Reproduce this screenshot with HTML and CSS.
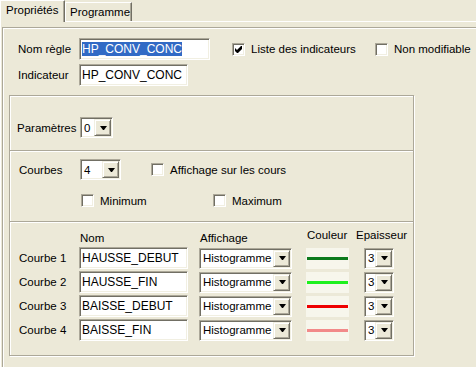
FILE: index.html
```html
<!DOCTYPE html>
<html lang="fr">
<head>
<meta charset="utf-8">
<title>Propriétés</title>
<link rel="stylesheet" href="styles.css">
</head>
<body>
<div class="tabs">
  <div class="tab active">Propriétés</div>
  <div class="tab inactive">Programme</div>
</div>
<div class="panel">
  <div class="outer">
    <div class="top">
      <div class="row">
        <span class="lbl lbl-top">Nom règle</span>
        <div class="field w-nom"><span class="sel">HP_CONV_CONC</span></div>
        <label class="chk chk-liste"><span class="box"><svg width="7" height="7" viewBox="0 0 7 7"><polygon points="0,2 2,4 6,0 7,0 7,3 3,7 2,7 0,5" fill="#000"/></svg></span>Liste des indicateurs</label>
        <label class="chk"><span class="box"></span>Non modifiable</label>
      </div>
      <div class="row row2">
        <span class="lbl lbl-top">Indicateur</span>
        <div class="field w-ind">HP_CONV_CONC</div>
      </div>
    </div>

    <div class="group">
      <div class="sec sec-params">
        <div class="line">
          <span class="lbl lbl-params">Paramètres</span>
          <div class="combo w-params"><span class="val">0</span><span class="btn"><svg width="7" height="4" viewBox="0 0 7 4"><polygon points="0,0 7,0 4,4 3,4" fill="#000"/></svg></span></div>
        </div>
      </div>
      <div class="sep"></div>
      <div class="sec sec-courbes">
        <div class="line">
          <span class="lbl lbl-courbes">Courbes</span>
          <div class="combo w-courbes"><span class="val">4</span><span class="btn"><svg width="7" height="4" viewBox="0 0 7 4"><polygon points="0,0 7,0 4,4 3,4" fill="#000"/></svg></span></div>
          <label class="chk chk-aff"><span class="box"></span>Affichage sur les cours</label>
        </div>
        <div class="line line-minmax">
          <label class="chk chk-min"><span class="box"></span>Minimum</label>
          <label class="chk"><span class="box"></span>Maximum</label>
        </div>
      </div>
      <div class="sep"></div>
      <div class="sec sec-table">
        <div class="head">
          <span class="h h-nom">Nom</span>
          <span class="h h-aff">Affichage</span>
          <span class="h h-coul">Couleur</span>
          <span class="h h-ep">Epaisseur</span>
        </div>
        <div class="grid">
          <span class="rlbl">Courbe 1</span>
          <div class="field w-name">HAUSSE_DEBUT</div>
          <div class="combo w-hist"><span class="val">Histogramme</span><span class="btn"><svg width="7" height="4" viewBox="0 0 7 4"><polygon points="0,0 7,0 4,4 3,4" fill="#000"/></svg></span></div>
          <div class="color"><span class="stroke c-dkgreen"></span></div>
          <div class="combo w-ep"><span class="val">3</span><span class="btn"><svg width="7" height="4" viewBox="0 0 7 4"><polygon points="0,0 7,0 4,4 3,4" fill="#000"/></svg></span></div>

          <span class="rlbl">Courbe 2</span>
          <div class="field w-name">HAUSSE_FIN</div>
          <div class="combo w-hist"><span class="val">Histogramme</span><span class="btn"><svg width="7" height="4" viewBox="0 0 7 4"><polygon points="0,0 7,0 4,4 3,4" fill="#000"/></svg></span></div>
          <div class="color"><span class="stroke c-green"></span></div>
          <div class="combo w-ep"><span class="val">3</span><span class="btn"><svg width="7" height="4" viewBox="0 0 7 4"><polygon points="0,0 7,0 4,4 3,4" fill="#000"/></svg></span></div>

          <span class="rlbl">Courbe 3</span>
          <div class="field w-name">BAISSE_DEBUT</div>
          <div class="combo w-hist"><span class="val">Histogramme</span><span class="btn"><svg width="7" height="4" viewBox="0 0 7 4"><polygon points="0,0 7,0 4,4 3,4" fill="#000"/></svg></span></div>
          <div class="color"><span class="stroke c-red"></span></div>
          <div class="combo w-ep"><span class="val">3</span><span class="btn"><svg width="7" height="4" viewBox="0 0 7 4"><polygon points="0,0 7,0 4,4 3,4" fill="#000"/></svg></span></div>

          <span class="rlbl">Courbe 4</span>
          <div class="field w-name">BAISSE_FIN</div>
          <div class="combo w-hist"><span class="val">Histogramme</span><span class="btn"><svg width="7" height="4" viewBox="0 0 7 4"><polygon points="0,0 7,0 4,4 3,4" fill="#000"/></svg></span></div>
          <div class="color"><span class="stroke c-pink"></span></div>
          <div class="combo w-ep"><span class="val">3</span><span class="btn"><svg width="7" height="4" viewBox="0 0 7 4"><polygon points="0,0 7,0 4,4 3,4" fill="#000"/></svg></span></div>
        </div>
      </div>
    </div>
  </div>
</div>
</body>
</html>
```

FILE: styles.css
```css
* { box-sizing: border-box; margin: 0; padding: 0; }
html, body { width: 476px; height: 367px; overflow: hidden; }
body {
  background: #ECE9D8;
  font-family: "Liberation Sans", Arial, sans-serif;
  font-size: 11.5px;
  color: #000;
}

/* tabs */
.tabs { display: flex; align-items: flex-end; height: 21px; }
.tab {
  display: flex; align-items: center;
  background: #ECE9D8;
  border-top: 1px solid #fff;
  border-left: 1px solid #fff;
  border-right: 1px solid #716F64;
  box-shadow: inset -1px 0 #ACA899;
  white-space: nowrap;
}
.tab.active {
  height: 22px; width: 65px;
  padding: 0 0 3px 5px;
  margin-bottom: -1px;
  position: relative; z-index: 1;
}
.tab.inactive { height: 19px; width: 67px; padding-left: 4px; }

.panel {
  border-top: 1px solid #fff;
  border-left: 1px solid #fff;
  padding: 5px 0 0 1px;
  height: 346px;
}
.outer {
  border-top: 1px solid #ACA899;
  border-left: 1px solid #ACA899;
  box-shadow: inset 1px 1px #fff;
  height: 340px;
  padding: 10px 0 0 6px;
}

/* top rows */
.top { padding-left: 9px; }
.row { display: flex; align-items: center; height: 22px; }
.row2 { margin-top: 4px; }
.lbl { white-space: nowrap; }
.lbl-top { width: 61px; }

.field {
  height: 22px;
  background: #fff;
  border: 1px solid;
  border-color: #ACA899 #fff #fff #ACA899;
  box-shadow: inset 1px 1px #716F64, inset -1px -1px #F1EFE2;
  font-size: 12px;
  padding-left: 2px;
  display: flex; align-items: center;
  white-space: nowrap; overflow: hidden;
}
.w-nom { width: 131px; }
.w-ind { width: 109px; }
.w-name { width: 109px; }
.sel { background: #316AC5; color: #fff; line-height: 14px; }

.chk { display: flex; align-items: center; gap: 6px; white-space: nowrap; }
.box {
  width: 13px; height: 13px; flex: none;
  background: #fff;
  border: 1px solid;
  border-color: #ACA899 #fff #fff #ACA899;
  box-shadow: inset 1px 1px #716F64, inset -1px -1px #F1EFE2;
  display: flex; align-items: center; justify-content: center;
}
.box svg { display: block; }
.chk-liste { margin-left: 22px; width: 143px; }

/* group frame */
.group {
  margin-top: 9px;
  width: 405px; height: 261px;
  border: 1px solid #ACA899;
  box-shadow: inset 1px 1px #fff, 1px 1px #fff;
  display: flex; flex-direction: column;
}
.sep { height: 2px; border-top: 1px solid #ACA899; border-bottom: 1px solid #fff; flex: none; }
.sec { flex: none; }
.line { display: flex; align-items: center; height: 21px; }

.sec-params { height: 54px; padding: 21px 0 0 7px; }
.lbl-params { width: 63px; }

.sec-courbes { height: 69px; padding: 7px 0 0 9px; }
.lbl-courbes { width: 61px; }
.chk-aff { margin-left: 30px; }
.line-minmax { height: 13px; margin-top: 14px; padding-left: 62px; }
.chk-min { width: 132px; }

.combo {
  height: 21px;
  background: #fff;
  border: 1px solid;
  border-color: #ACA899 #fff #fff #ACA899;
  box-shadow: inset 1px 1px #716F64, inset -1px -1px #F1EFE2;
  padding: 1px;
  display: flex; align-items: center;
}
.combo .val { flex: 1; padding-left: 2px; white-space: nowrap; overflow: hidden; }
.btn {
  width: 17px; height: 17px; flex: none;
  background: #ECE9D8;
  border: 1px solid;
  border-color: #F1EFE2 #716F64 #716F64 #F1EFE2;
  box-shadow: inset 1px 1px #fff, inset -1px -1px #ACA899;
  display: flex; align-items: center; justify-content: center;
  padding-left: 1px;
}
.btn svg { display: block; }
.w-params { width: 33px; }
.w-courbes { width: 41px; }
.w-hist { width: 93px; }
.w-ep { width: 30px; }

/* table */
.sec-table { flex: 1; padding: 8px 0 0 9px; }
.head { display: flex; align-items: flex-start; height: 14px; line-height: 14px; }
.h { white-space: nowrap; }
.h-nom { margin-left: 61px; width: 120px; }
.h-aff { width: 107px; }
.h-coul { width: 49px; margin-top: -3px; }
.h-ep { margin-top: -3px; }

.grid {
  margin-top: 2px;
  display: grid;
  grid-template-columns: 60px 120px 107px 58px 30px;
  grid-auto-rows: 22px;
  row-gap: 2px;
  align-items: center;
}
.rlbl { white-space: nowrap; }
.color {
  width: 43px; height: 21px;
  background: #F7F6EC;
  display: flex; align-items: center;
  padding: 0 1px;
}
.stroke { display: block; width: 100%; height: 3px; }
.c-dkgreen { background: #0C7A1C; }
.c-green { background: #1EF01E; }
.c-red { background: #EE0000; }
.c-pink { background: #F28A8A; }
```
